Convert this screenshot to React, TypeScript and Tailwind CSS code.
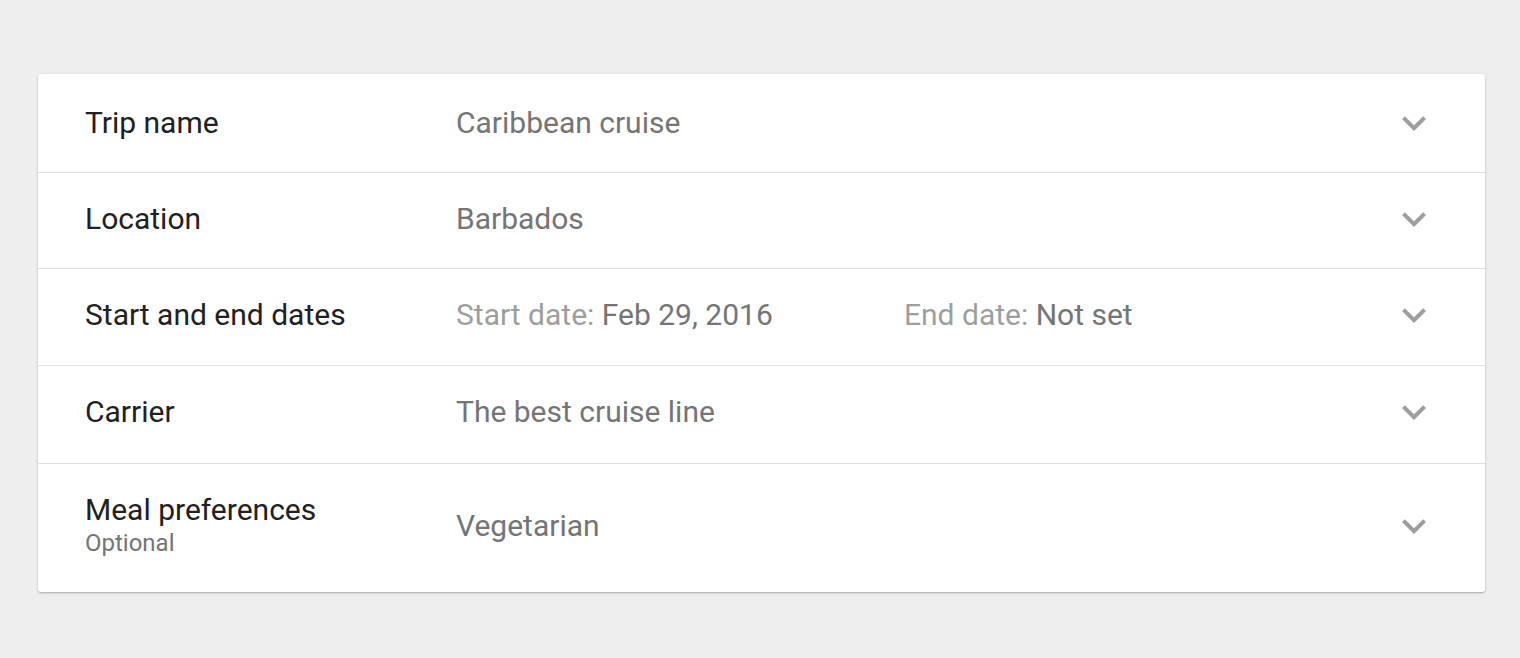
import React from "react";

function Chevron() {
  return (
    <svg width="48" height="48" viewBox="0 0 24 24" className="shrink-0">
      <path d="M16.59 8.59L12 13.17 7.41 8.59 6 10l6 6 6-6z" fill="#9e9e9e" />
    </svg>
  );
}

function Row({
  label,
  sub,
  children,
  h,
  last,
}: {
  label: string;
  sub?: string;
  children: React.ReactNode;
  h: string;
  last?: boolean;
}) {
  return (
    <div
      className={`flex items-center pl-[47px] pr-[47px] ${h} ${
        last ? "" : "border-b border-[#e0e0e0]"
      }`}
    >
      <div className="w-[371px] shrink-0">
        <div className="text-[30px] leading-[34px] text-[#212121]">{label}</div>
        {sub && <div className="text-[24px] leading-[32px] text-[#757575]">{sub}</div>}
      </div>
      <div className="flex-1 text-[30px] leading-[34px] text-[#757575]">{children}</div>
      <Chevron />
    </div>
  );
}

export default function App() {
  return (
    <div
      className="min-h-[658px] w-full bg-[#eeeeee] pt-[74px]"
      style={{ fontFamily: "Roboto, 'Noto Sans', sans-serif" }}
    >
      <div className="ml-[38px] w-[1447px] rounded-[3px] bg-white shadow-[0_1px_3px_rgba(0,0,0,0.22),0_1px_1px_rgba(0,0,0,0.1)]">
        <Row label="Trip name" h="h-[99px] pb-[1px]">
          Caribbean cruise
        </Row>
        <Row label="Location" h="h-[96px] pb-[3px]">
          Barbados
        </Row>
        <Row label="Start and end dates" h="h-[97px] pb-[4px]">
          <div className="flex">
            <div className="w-[448px]">
              <span className="text-[#9e9e9e]">Start date: </span>
              <span>Feb 29, 2016</span>
            </div>
            <div>
              <span className="text-[#9e9e9e]">End date: </span>
              <span>Not set</span>
            </div>
          </div>
        </Row>
        <Row label="Carrier" h="h-[98px] pb-[6px]">
          The best cruise line
        </Row>
        <Row label="Meal preferences" sub="Optional" h="h-[128px] pb-[5px]" last>
          Vegetarian
        </Row>
      </div>
    </div>
  );
}
